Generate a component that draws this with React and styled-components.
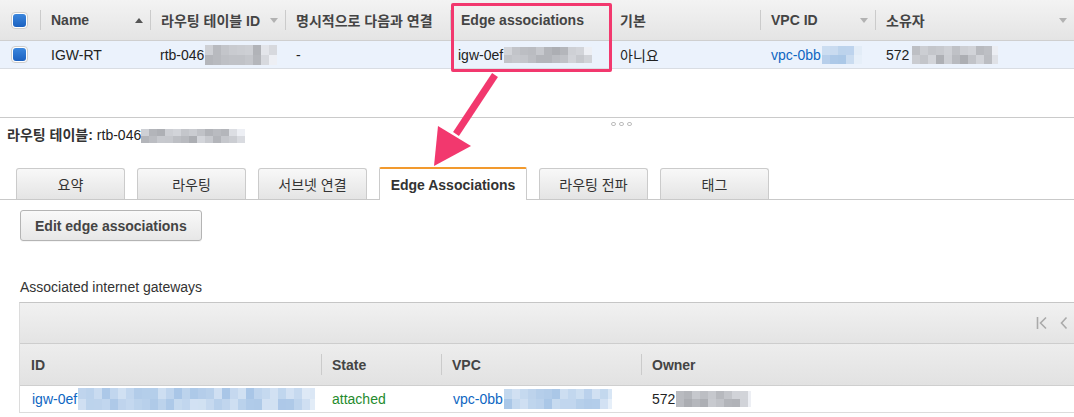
import React from 'react';
import styled, { createGlobalStyle, css } from 'styled-components';

const GlobalStyle = createGlobalStyle`
  html, body {
    margin: 0;
    padding: 0;
    background: #fff;
  }
  body {
    font-family: "Liberation Sans", "Noto Sans CJK KR", Arial, sans-serif;
    font-size: 14px;
    color: #222;
  }
`;

const PINK = '#f2386e';
const LINK = '#0e66c2';

const Page = styled.div`
  position: relative;
  width: 1074px;
  height: 417px;
  overflow: hidden;
`;

/* ---------- top list ---------- */

const TOP_COLS = '40px 110px 135px 165px 159px 151px 115px 1fr';

const TopPanel = styled.div`
  height: 117px;
`;

const TopHeader = styled.div`
  display: grid;
  grid-template-columns: ${TOP_COLS};
  height: 40px;
  background: linear-gradient(#f3f3f3, #e4e4e4);
  border-bottom: 1px solid #cfcfcf;
`;

const TopRow = styled.div`
  display: grid;
  grid-template-columns: ${TOP_COLS};
  height: 27px;
  background: #ebf2fc;
  border-bottom: 1px solid #d9dde3;
`;

const HeadCell = styled.div`
  position: relative;
  display: flex;
  align-items: center;
  justify-content: space-between;
  padding: 0 7px 0 11px;
  font-weight: bold;
  color: #444;
  white-space: nowrap;

  ${(p) =>
    p.$sep &&
    css`
      &::before {
        content: '';
        position: absolute;
        left: 0;
        top: 10px;
        bottom: 10px;
        width: 1px;
        background: #cbcbcb;
      }
    `}
`;

const Cell = styled.div`
  display: flex;
  align-items: center;
  padding: 0 0 0 ${(p) => p.$pad ?? 11}px;
  white-space: nowrap;
  color: ${(p) => p.$color || '#222'};
`;

const Caret = styled.span`
  width: 0;
  height: 0;
  border-left: 4px solid transparent;
  border-right: 4px solid transparent;
  ${(p) =>
    p.$up
      ? css`
          border-bottom: 5px solid #555;
        `
      : css`
          border-top: 5px solid #b2b2b2;
        `}
`;

const Check = styled.span`
  box-sizing: border-box;
  width: 17px;
  height: 17px;
  border: 1px solid #cdcdcd;
  border-radius: 4px;
  background: #fff;
  padding: 1px;
  display: inline-flex;

  &::after {
    content: '';
    flex: 1;
    border-radius: 3px;
    background: linear-gradient(#3b86dd, #1b61c0);
  }
`;

/* ---------- splitter / detail ---------- */

const Splitter = styled.div`
  height: 5px;
  border-top: 1px solid #cacaca;
  display: flex;
  gap: 3px;
  padding: 4px 0 0 611px;
`;

const Dot = styled.span`
  box-sizing: border-box;
  width: 5px;
  height: 4px;
  border: 1px solid #bdbdbd;
  border-radius: 2px;
`;

const Title = styled.div`
  padding: 0 7px;
  line-height: 17px;
  height: 17px;
  color: #222;
  display: flex;
  align-items: center;
  white-space: nowrap;

  b {
    margin-right: 4px;
    color: #333;
  }
`;

const TabBar = styled.div`
  margin-top: 23px;
  height: 32px;
  display: flex;
  align-items: flex-end;
  gap: 12px;
  padding-left: 16px;
  border-bottom: 1px solid #c9c9c9;
`;

const Tab = styled.div`
  box-sizing: border-box;
  width: 109px;
  height: 31px;
  display: flex;
  align-items: center;
  justify-content: center;
  border: 1px solid #cbcbcb;
  border-bottom: none;
  border-radius: 3px 3px 0 0;
  background: linear-gradient(#f8f8f8, #e4e4e4);
  color: #333;
  font-size: 14px;

  ${(p) =>
    p.$active &&
    css`
      width: 148px;
      height: 33px;
      margin-bottom: -1px;
      border-top: 2px solid #f29a2e;
      border-radius: 2px 2px 0 0;
      background: #fff;
      font-weight: bold;
      color: #333;
    `}
`;

const Content = styled.div`
  padding: 10px 0 0 20px;
`;

const Button = styled.button`
  box-sizing: border-box;
  height: 31px;
  padding: 0 14px;
  border: 1px solid #b4b4b4;
  border-radius: 3px;
  background: linear-gradient(#f9f9f9, #e7e7e7);
  font-family: inherit;
  font-size: 14px;
  font-weight: bold;
  color: #444;
  box-shadow: 0 1px 0 rgba(0, 0, 0, 0.04);
`;

const SectionLabel = styled.div`
  margin-top: 38px;
  line-height: 17px;
  color: #333;
`;

/* ---------- associated gateways table ---------- */

const BOT_COLS = '301px 120px 200px 1fr';

const Grid = styled.div`
  margin: 6px 0 0 -1px;
  width: 1060px;
  border-top: 1px solid #c6c6c6;
  border-left: 1px solid #dcdcdc;
`;

const Toolbar = styled.div`
  height: 40px;
  display: flex;
  align-items: center;
  justify-content: flex-end;
  gap: 12px;
  padding-right: 12px;
  background: linear-gradient(#f1f1f1, #e4e4e4);
  border-bottom: 1px solid #cdcdcd;
`;

const GridHeader = styled.div`
  display: grid;
  grid-template-columns: ${BOT_COLS};
  height: 41px;
  background: linear-gradient(#ededed, #e2e2e2);
  border-bottom: 1px solid #cfcfcf;
`;

const GridRow = styled.div`
  display: grid;
  grid-template-columns: ${BOT_COLS};
  height: 26px;
  border-bottom: 1px solid #dcdcdc;
`;

/* ---------- redaction mosaic ---------- */

const Mosaic = styled.span`
  display: inline-grid;
  grid-auto-flow: column;
  grid-template-rows: repeat(2, 1fr);
  grid-auto-columns: 8px;
  height: ${(p) => p.$h}px;
  width: ${(p) => p.$w}px;
  overflow: hidden;
  margin-left: ${(p) => p.$ml ?? 0}px;
`;

function shade(seed, i, tone, cols) {
  const x = Math.sin(seed * 97.13 + i * 12.9898) * 43758.5453;
  const r = x - Math.floor(x);
  const col = Math.floor(i / 2);
  const edge = col === cols - 1 ? 0.5 : col === cols - 2 ? 0.2 : 0;
  const t = Math.min(1, r * 0.55 + edge + 0.12);
  if (tone === 'blue') {
    const rr = Math.round(160 + t * 75);
    const gg = Math.round(192 + t * 50);
    const bb = Math.round(228 + t * 22);
    return `rgb(${rr},${gg},${bb})`;
  }
  const v = Math.round(162 + t * 75);
  return `rgb(${v},${v + 2},${Math.min(v + 7, 250)})`;
}

function Redacted({ w, h = 18, tone = 'gray', seed = 1, ml }) {
  const cols = Math.ceil(w / 8);
  const cells = [];
  for (let i = 0; i < cols * 2; i++) {
    cells.push(<span key={i} style={{ background: shade(seed, i, tone, cols) }} />);
  }
  return (
    <Mosaic $w={w} $h={h} $ml={ml}>
      {cells}
    </Mosaic>
  );
}

/* ---------- annotation overlay ---------- */

const Highlight = styled.div`
  position: absolute;
  left: 451px;
  top: 3px;
  width: 161px;
  height: 69px;
  box-sizing: border-box;
  border: 3px solid ${PINK};
  border-radius: 2px;
  pointer-events: none;
`;

const Arrow = styled.svg`
  position: absolute;
  left: 420px;
  top: 60px;
  pointer-events: none;
`;

const PagerIcons = () => (
  <>
    <svg width="12" height="14" viewBox="0 0 12 14">
      <path d="M1.5 1v12" stroke="#aaa" strokeWidth="1.6" />
      <path d="M10 1.5L4.5 7l5.5 5.5" stroke="#aaa" strokeWidth="1.6" fill="none" />
    </svg>
    <svg width="8" height="14" viewBox="0 0 8 14">
      <path d="M6.5 1.5L1.5 7l5 5.5" stroke="#aaa" strokeWidth="1.6" fill="none" />
    </svg>
  </>
);

export default function App() {
  return (
    <Page>
      <GlobalStyle />

      <TopPanel>
        <TopHeader>
          <HeadCell>
            <Check />
          </HeadCell>
          <HeadCell $sep>
            Name <Caret $up />
          </HeadCell>
          <HeadCell $sep>
            라우팅 테이블 ID <Caret />
          </HeadCell>
          <HeadCell $sep>명시적으로 다음과 연결</HeadCell>
          <HeadCell $sep>Edge associations</HeadCell>
          <HeadCell>기본</HeadCell>
          <HeadCell $sep>
            VPC ID <Caret />
          </HeadCell>
          <HeadCell $sep>
            소유자 <Caret />
          </HeadCell>
        </TopHeader>
        <TopRow>
          <Cell>
            <Check />
          </Cell>
          <Cell>IGW-RT</Cell>
          <Cell $pad={10}>
            rtb-046
            <Redacted w={72} h={20} seed={3} ml={1} />
          </Cell>
          <Cell>-</Cell>
          <Cell $pad={8}>
            igw-0ef
            <Redacted w={88} h={16} seed={5} ml={1} />
          </Cell>
          <Cell>아니요</Cell>
          <Cell $color={LINK}>
            vpc-0bb
            <Redacted w={40} h={18} tone="blue" seed={7} ml={1} />
          </Cell>
          <Cell>
            572
            <Redacted w={86} h={18} seed={9} ml={3} />
          </Cell>
        </TopRow>
      </TopPanel>

      <Splitter>
        <Dot />
        <Dot />
        <Dot />
      </Splitter>

      <Title>
        <b>라우팅 테이블:</b> rtb-046
        <Redacted w={104} h={14} seed={11} />
      </Title>

      <TabBar>
        <Tab>요약</Tab>
        <Tab>라우팅</Tab>
        <Tab>서브넷 연결</Tab>
        <Tab $active>Edge Associations</Tab>
        <Tab>라우팅 전파</Tab>
        <Tab>태그</Tab>
      </TabBar>

      <Content>
        <Button>Edit edge associations</Button>
        <SectionLabel>Associated internet gateways</SectionLabel>
        <Grid>
          <Toolbar>
            <PagerIcons />
          </Toolbar>
          <GridHeader>
            <HeadCell>ID</HeadCell>
            <HeadCell $sep>State</HeadCell>
            <HeadCell $sep>VPC</HeadCell>
            <HeadCell $sep>Owner</HeadCell>
          </GridHeader>
          <GridRow>
            <Cell $pad={12} $color={LINK}>
              igw-0ef
              <Redacted w={237} h={22} tone="blue" seed={13} ml={1} />
            </Cell>
            <Cell $color="#1f8b2e">attached</Cell>
            <Cell $pad={12} $color={LINK}>
              vpc-0bb
              <Redacted w={108} h={20} tone="blue" seed={17} ml={1} />
            </Cell>
            <Cell>
              572
              <Redacted w={75} h={16} seed={19} ml={1} />
            </Cell>
          </GridRow>
        </Grid>
      </Content>

      <Highlight />
      <Arrow width="100" height="120" viewBox="0 0 100 120">
        <path d="M75 15 L36 74" stroke={PINK} strokeWidth="7" strokeLinecap="butt" />
        <polygon points="18,66 51,86 14,106" fill={PINK} />
      </Arrow>
    </Page>
  );
}
